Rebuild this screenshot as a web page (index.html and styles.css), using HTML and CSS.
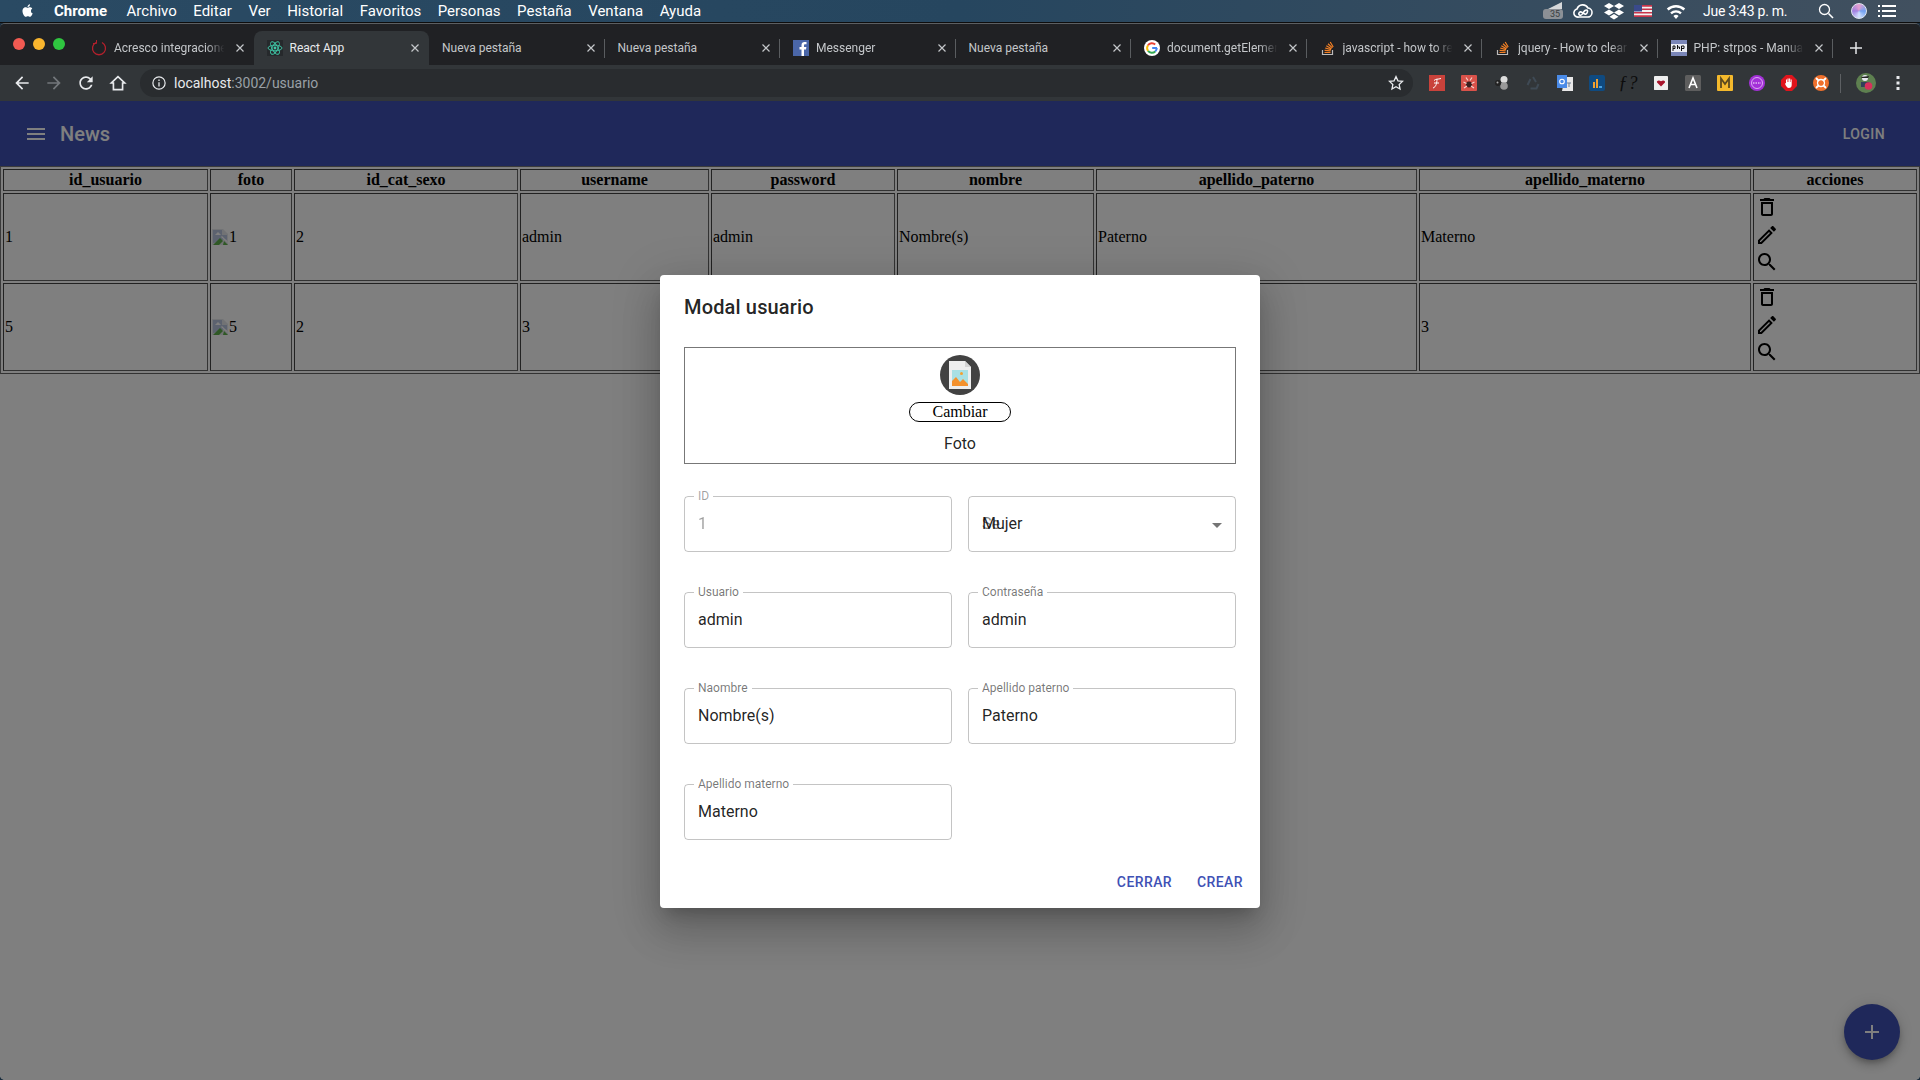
FILE: index.html
```html
<!DOCTYPE html>
<html lang="es">
<head>
<meta charset="utf-8">
<title>React App</title>
<link rel="stylesheet" href="styles.css">
</head>
<body>
<svg class="defs" width="0" height="0">
  <symbol id="i-del" viewBox="0 0 24 24"><path d="M6 19c0 1.1.9 2 2 2h8c1.1 0 2-.9 2-2V7H6v12zM8 9h8v10H8V9zm7.5-5l-1-1h-5l-1 1H5v2h14V4h-3.5z"/></symbol>
  <symbol id="i-edit" viewBox="0 0 24 24"><path d="M14.06 9.02l.92.92L5.92 19H5v-.92l9.06-9.06M17.66 3c-.25 0-.51.1-.7.29l-1.83 1.83 3.75 3.75 1.83-1.83c.39-.39.39-1.02 0-1.41l-2.34-2.34c-.2-.2-.45-.29-.71-.29zm-3.6 3.19L3 17.25V21h3.75L17.81 9.94l-3.75-3.75z"/></symbol>
  <symbol id="i-search" viewBox="0 0 24 24"><path d="M15.5 14h-.79l-.28-.27C15.41 12.59 16 11.11 16 9.5 16 5.91 13.09 3 9.5 3S3 5.91 3 9.5 5.91 16 9.5 16c1.61 0 3.09-.59 4.23-1.57l.27.28v.79l5 4.99L20.49 19l-4.99-5zm-6 0C7.01 14 5 11.99 5 9.5S7.01 5 9.5 5 14 7.01 14 9.5 11.99 14 9.5 14z"/></symbol>
  <symbol id="i-broken" viewBox="0 0 16 16"><path fill="#e4e6ea" d="M0 0h11l5 5v11H0z"/><path fill="#b9c4de" d="M1 1h9v5h5v5l-3-1-4 3-7 1z"/><path fill="#fff" d="M3 6l3-3 3 3z"/><path fill="#5fb04a" d="M1 16l7-7 3 3-4 4z"/><path fill="#5fb04a" d="M12 12l4 4h-5z"/><path fill="#fff" d="M9 8l1-1 6 6v1z"/></symbol>
  <symbol id="i-x" viewBox="0 0 10 10"><path d="M1.5 1.500l7 7M8.5 1.500l-7 7" fill="none" stroke="#c4c7ca" stroke-width="1.2"/></symbol>
  <symbol id="i-so" viewBox="0 0 16 16"><path d="M2.5 10v4.500h10V10" fill="none" stroke="#bcbbbb" stroke-width="1.2"/><path d="M4.5 12.500h6M4.600 10.300l6 .6M5.200 8l5.800 1.700M6.300 5.800l5.200 3M8 3.700l4.400 4.200M10.200 2l3 5" stroke="#f48024" stroke-width="1.2" fill="none"/></symbol>
</svg>

<header class="menubar">
  <svg class="apple" viewBox="0 0 24 24" width="15" height="17"><path fill="#fff" d="M17.5 12.600c0-2.500 2-3.700 2.100-3.800-1.200-1.700-3-1.900-3.600-2-1.500-.2-3 .9-3.800.9s-2-.9-3.300-.9c-1.700 0-3.300 1-4.100 2.500-1.800 3.100-.5 7.600 1.200 10.100.9 1.200 1.900 2.600 3.200 2.500 1.300-.1 1.800-.8 3.300-.8s2 .8 3.300.8c1.400 0 2.300-1.200 3.100-2.500 1-1.400 1.400-2.800 1.400-2.900-.1 0-2.800-1-2.800-3.900zM15 5.100c.7-.9 1.200-2 1-3.200-1 0-2.200.7-2.900 1.500-.6.700-1.200 1.900-1 3 1.100.1 2.200-.5 2.900-1.300z"/></svg>
  <nav class="menu-items">
    <span class="menu-app">Chrome</span><span>Archivo</span><span>Editar</span><span>Ver</span><span>Historial</span><span>Favoritos</span><span>Personas</span><span>Pestaña</span><span>Ventana</span><span>Ayuda</span>
  </nav>
  <div class="status">
    <span class="st-bat">35</span>
    <svg class="st-icon" viewBox="0 0 22 16" width="22" height="16"><g fill="none" stroke="#fff" stroke-width="1.6"><path d="M7 14h8a4.500 4.500 0 0 0 1-9 6 6 0 0 0-11 1 4 4 0 0 0 2 8z"/><path d="M7 10c2-4 6 4 8 0s-2-4-4 0-5 2-4 0"/></g></svg>
    <svg class="st-icon" viewBox="0 0 20 18" width="20" height="18"><path fill="#fff" d="M5 1l5 3-5 3-5-3zM15 1l5 3-5 3-5-3zM5 7.500l5 3-5 3-5-3zM15 7.500l5 3-5 3-5-3zM10 12l4.500 2.700L10 17.500l-4.500-2.800z"/></svg>
    <svg class="st-icon st-flag" viewBox="0 0 18 12" width="18" height="12"><rect width="18" height="12" fill="#f2f2f2"/><path fill="#c8344a" d="M0 0h18v1.700H0zM0 3.400h18v1.700H0zM0 6.900h18v1.700H0zM0 10.300h18V12H0z"/><rect width="8" height="6.500" fill="#3a4a8c"/></svg>
    <svg class="st-icon st-wifi" viewBox="0 0 22 16" width="22" height="16"><path fill="#fff" d="M11 16l-2.600-3a3.800 3.800 0 0 1 5.200 0zM6.800 11.200L5.200 9.400a8.700 8.700 0 0 1 11.600 0l-1.600 1.800a6.200 6.200 0 0 0-8.400 0zM3.500 7.500L1.800 5.600a13.700 13.700 0 0 1 18.400 0l-1.700 1.900a11.200 11.200 0 0 0-15 0z"/></svg>
    <span class="st-time">Jue 3:43 p. m.</span>
    <svg class="st-icon st-search" viewBox="0 0 16 16" width="16" height="16"><circle cx="6.500" cy="6.500" r="5" fill="none" stroke="#fff" stroke-width="1.3"/><path d="M10.500 10.500L15 15" stroke="#fff" stroke-width="1.6"/></svg>
    <span class="st-siri"></span>
    <svg class="st-list" viewBox="0 0 18 12" width="18" height="12"><path fill="#fff" d="M0 0h2v2H0zM4 0h14v2H4zM0 5h2v2H0zM4 5h14v2H4zM0 10h2v2H0zM4 10h14v2H4z"/></svg>
  </div>
</header>

<div class="window">
  <div class="tabstrip">
    <div class="lights"><i class="l-red"></i><i class="l-yellow"></i><i class="l-green"></i></div>
    <div class="tab tab-first">
      <svg class="fav" viewBox="0 0 16 16"><path d="M5 2.500a6.500 6.500 0 1 0 6 0" fill="none" stroke="#b3202c" stroke-width="1.3"/><path d="M5.500 0v3.500H2" fill="none" stroke="#b3202c" stroke-width="1"/></svg>
      <span class="tab-title">Acresco integraciones</span><svg class="tab-x"><use href="#i-x"/></svg>
    </div>
    <div class="tab tab-active">
      <svg class="fav" viewBox="0 0 16 16"><rect width="16" height="16" fill="#26292c"/><g fill="none" stroke="#3fc9a8" stroke-width=".9"><ellipse cx="8" cy="8" rx="7" ry="2.800"/><ellipse cx="8" cy="8" rx="7" ry="2.800" transform="rotate(60 8 8)"/><ellipse cx="8" cy="8" rx="7" ry="2.800" transform="rotate(120 8 8)"/></g><circle cx="8" cy="8" r="1.400" fill="#3fc9a8"/></svg>
      <span class="tab-title tab-title-on">React App</span><svg class="tab-x"><use href="#i-x"/></svg>
    </div>
    <div class="tab tab-plain"><span class="tab-title">Nueva pestaña</span><svg class="tab-x"><use href="#i-x"/></svg></div>
    <div class="tab tab-plain"><span class="tab-title">Nueva pestaña</span><svg class="tab-x"><use href="#i-x"/></svg></div>
    <div class="tab">
      <svg class="fav" viewBox="0 0 16 16"><rect width="16" height="16" fill="#4a66a8"/><path fill="#fff" d="M11 16V9.500h2l.4-2.500H11V5.500c0-.8.3-1.200 1.300-1.200h1.200V2.100C13 2 12.300 2 11.600 2 9.700 2 8.500 3.100 8.500 5.200V7H6.500v2.500h2V16z"/></svg>
      <span class="tab-title">Messenger</span><svg class="tab-x"><use href="#i-x"/></svg>
    </div>
    <div class="tab tab-plain"><span class="tab-title">Nueva pestaña</span><svg class="tab-x"><use href="#i-x"/></svg></div>
    <div class="tab">
      <svg class="fav" viewBox="0 0 16 16"><circle cx="8" cy="8" r="8" fill="#fff"/><path d="M13 8H8.200" stroke="#4285f4" stroke-width="2" fill="none"/><path d="M12.800 8a4.800 4.800 0 0 1-1.600 3.500" stroke="#4285f4" stroke-width="2" fill="none"/><path d="M11.200 11.500A4.800 4.800 0 0 1 4 10.700" stroke="#34a853" stroke-width="2" fill="none"/><path d="M4 10.700a4.800 4.800 0 0 1 0-5.400" stroke="#fbbc05" stroke-width="2" fill="none"/><path d="M4 5.300a4.800 4.800 0 0 1 7.200-.8" stroke="#ea4335" stroke-width="2" fill="none"/></svg>
      <span class="tab-title">document.getElementById</span><svg class="tab-x"><use href="#i-x"/></svg>
    </div>
    <div class="tab"><svg class="fav"><use href="#i-so"/></svg><span class="tab-title">javascript - how to reset</span><svg class="tab-x"><use href="#i-x"/></svg></div>
    <div class="tab"><svg class="fav"><use href="#i-so"/></svg><span class="tab-title">jquery - How to clear</span><svg class="tab-x"><use href="#i-x"/></svg></div>
    <div class="tab">
      <svg class="fav" viewBox="0 0 16 16"><rect width="16" height="16" fill="#7a86b8"/><rect y="4" width="16" height="8" fill="#fff" opacity=".85"/><path d="M2 6v5M2 6h2v2.500H2M6.500 5v4M6.500 7h2v2M10.500 6v5M10.500 6h2.500v2.500h-2.500" fill="none" stroke="#111" stroke-width="1"/></svg>
      <span class="tab-title">PHP: strpos - Manual</span><svg class="tab-x"><use href="#i-x"/></svg>
    </div>
    <svg class="newtab" viewBox="0 0 14 14"><path d="M7 1v12M1 7h12" stroke="#e4e6e8" stroke-width="1.5"/></svg>
  </div>

  <div class="toolbar">
    <span class="tb-btn"><svg viewBox="0 0 24 24" width="20" height="20"><path fill="#e8eaed" d="M20 11H7.830l5.590-5.590L12 4l-8 8 8 8 1.410-1.410L7.830 13H20v-2z"/></svg></span>
    <span class="tb-btn"><svg viewBox="0 0 24 24" width="20" height="20"><path fill="#73777b" d="M4 11h12.170l-5.590-5.590L12 4l8 8-8 8-1.410-1.410L16.170 13H4v-2z"/></svg></span>
    <span class="tb-btn"><svg viewBox="0 0 24 24" width="20" height="20"><path fill="#e8eaed" d="M17.650 6.350C16.200 4.900 14.210 4 12 4c-4.420 0-7.990 3.580-7.990 8s3.570 8 7.990 8c3.730 0 6.840-2.550 7.730-6h-2.080c-.82 2.330-3.040 4-5.650 4-3.310 0-6-2.690-6-6s2.690-6 6-6c1.660 0 3.140.69 4.220 1.780L13 11h7V4l-2.350 2.350z"/></svg></span>
    <span class="tb-btn"><svg viewBox="0 0 24 24" width="20" height="20"><path fill="none" stroke="#e8eaed" stroke-width="2" d="M12 4.300L4 12h2.500v8h11v-8H20z"/></svg></span>
    <div class="omnibox">
      <svg viewBox="0 0 16 16" width="14" height="14"><circle cx="8" cy="8" r="7" fill="none" stroke="#e8eaed" stroke-width="1.4"/><path d="M8 7v5M8 4v1.800" stroke="#e8eaed" stroke-width="1.5"/></svg>
      <span class="url"><b>localhost</b>:3002/usuario</span>
      <svg class="star" viewBox="0 0 24 24" width="18" height="18"><path fill="none" stroke="#e8eaed" stroke-width="1.7" d="M12 3.500l2.600 5.600 6.100.7-4.500 4.200 1.200 6L12 17l-5.400 3 1.200-6-4.500-4.200 6.100-.7z"/></svg>
    </div>
    <div class="exts">
      <span class="ext"><svg viewBox="0 0 16 16" width="16" height="16"><rect width="16" height="16" fill="#c9423b"/><path d="M5 5.500c2-2 4-1 7-2M8 4c0 4-1 8-4 9M5 8h5" stroke="#fff" stroke-width="1" fill="none"/></svg></span>
      <span class="ext"><svg viewBox="0 0 16 16" width="16" height="16"><rect width="16" height="16" rx="1" fill="#d9524a"/><circle cx="8" cy="9.500" r="3" fill="#3a2020"/><path d="M5 2.500l2 3M11 2.500l-2 3M2.500 7l3 1.500M13.500 7l-3 1.500M3 13l3-2M13 13l-3-2" stroke="#f6d0cc" stroke-width="1.2"/></svg></span>
      <span class="ext"><svg viewBox="0 0 16 16" width="16" height="16"><circle cx="11" cy="4.500" r="3.500" fill="#ddd"/><circle cx="11" cy="11" r="3.800" fill="#999"/><circle cx="5" cy="8" r="3" fill="#222"/><circle cx="4.500" cy="7.500" r="1" fill="#aaa"/></svg></span>
      <span class="ext"><svg viewBox="0 0 16 16" width="16" height="16"><path d="M8 2l3 5M13.500 9l-2 4.500h-6M2.500 10l3-6" fill="none" stroke="#3f4a55" stroke-width="2"/></svg></span>
      <span class="ext"><svg viewBox="0 0 16 16" width="16" height="16"><path d="M8 2h8v14H5z" fill="#e8e8e8"/><path d="M0 0h10v13H0z" fill="#4a8be8"/><circle cx="5" cy="6.500" r="2.300" fill="none" stroke="#fff" stroke-width="1.1"/><path d="M10 8h4M12 8v4" stroke="#6a7a90" stroke-width="1"/></svg></span>
      <span class="ext"><svg viewBox="0 0 16 16" width="16" height="16"><rect width="16" height="16" rx="2" fill="#0f4a80"/><path d="M4 7h2v6H4zM7 4h2v9H7z" fill="#f0a030"/><path d="M10 11h3v2h-3z" fill="#48a0e0"/></svg></span>
      <span class="ext ext-f">ƒ?</span>
      <span class="ext"><svg viewBox="0 0 16 16" width="14" height="16"><rect width="16" height="16" rx="1" fill="#eee"/><path d="M8 12L3.500 7.500c-1-2 2-3.500 4.500-1.500 2.500-2 5.500-.5 4.500 1.500z" fill="#a8142c"/></svg></span>
      <span class="ext"><svg viewBox="0 0 16 16" width="16" height="16"><rect width="16" height="16" rx="1.500" fill="#5e5e5e"/><path d="M4 13L8 3l4 10M5.500 9.500h5" stroke="#fff" stroke-width="1.6" fill="none"/></svg></span>
      <span class="ext"><svg viewBox="0 0 16 16" width="16" height="16"><rect width="16" height="16" rx="1" fill="#f4b92c"/><path d="M4 13V3.500L8 9l4-5.500V13" stroke="#5b4a20" stroke-width="1.8" fill="none"/></svg></span>
      <span class="ext"><svg viewBox="0 0 16 16" width="16" height="16"><circle cx="8" cy="8" r="8" fill="#a330d8"/><circle cx="8" cy="8" r="5.500" fill="none" stroke="#e8c8f8" stroke-width=".8"/><path d="M4 8h8" stroke="#fff" stroke-width="1" stroke-dasharray="1.500 1"/></svg></span>
      <span class="ext"><svg viewBox="0 0 16 16" width="16" height="16"><path d="M5 0h6l5 5v6l-5 5H5l-5-5V5z" fill="#e0141c"/><path d="M5 7V4.500h1V7h.5V3.500h1.100V7h.5V3.500h1.100V7h.5V4.500h1V10c0 2-1 3-2.900 3-1.500 0-2-1-3.300-3L4 8.500c.3-.5.700-.4 1-.1z" fill="#fff"/></svg></span>
      <span class="ext"><svg viewBox="0 0 16 16" width="16" height="16"><circle cx="8" cy="8" r="8" fill="#f0702c"/><circle cx="8" cy="8" r="3.500" fill="none" stroke="#fff" stroke-width="1.3"/><path d="M3 3l3 3M13 3l-3 3M3 13l3-3M13 13l-3-3" stroke="#fff" stroke-width="1.8"/></svg></span>
    </div>
    <i class="tb-sep"></i>
    <svg class="me" viewBox="0 0 20 20" width="20" height="20"><circle cx="10" cy="10" r="10" fill="#5e8050"/><circle cx="9" cy="5" r="3" fill="#e8e8f0"/><path d="M5 4l8-1-1 2H6z" fill="#222"/><path d="M5 9h8v5H5z" fill="#33405a"/><circle cx="12.5" cy="13" r="3.800" fill="#d8305c"/></svg>
    <svg class="dots" viewBox="0 0 4 16" width="4" height="16"><path fill="#e8eaed" d="M.5 1h3v3h-3zM.5 6.500h3v3h-3zM.5 12h3v3h-3z"/></svg>
  </div>

  <main class="page">
    <div class="appbar">
      <svg class="hamburger" viewBox="0 0 24 24" width="24" height="24"><path fill="#fff" d="M3 18h18v-2H3v2zm0-5h18v-2H3v2zm0-7v2h18V6H3z"/></svg>
      <span class="appbar-title">News</span>
      <span class="login">LOGIN</span>
    </div>

    <table class="users">
      <colgroup>
        <col class="c1"><col class="c2"><col class="c3"><col class="c4"><col class="c5"><col class="c6"><col class="c7"><col class="c8"><col class="c9">
      </colgroup>
      <thead>
        <tr><th>id_usuario</th><th>foto</th><th>id_cat_sexo</th><th>username</th><th>password</th><th>nombre</th><th>apellido_paterno</th><th>apellido_materno</th><th>acciones</th></tr>
      </thead>
      <tbody>
        <tr>
          <td>1</td>
          <td><svg class="broken"><use href="#i-broken"/></svg>1</td>
          <td>2</td><td>admin</td><td>admin</td><td>Nombre(s)</td><td>Paterno</td><td>Materno</td>
          <td class="actions"><svg class="act"><use href="#i-del"/></svg><svg class="act"><use href="#i-edit"/></svg><svg class="act"><use href="#i-search"/></svg></td>
        </tr>
        <tr>
          <td>5</td>
          <td><svg class="broken"><use href="#i-broken"/></svg>5</td>
          <td>2</td><td>3</td><td>3</td><td>3</td><td>3</td><td>3</td>
          <td class="actions"><svg class="act"><use href="#i-del"/></svg><svg class="act"><use href="#i-edit"/></svg><svg class="act"><use href="#i-search"/></svg></td>
        </tr>
      </tbody>
    </table>

    <span class="fab"><svg viewBox="0 0 24 24" width="24" height="24"><path fill="#fff" d="M19 13h-6v6h-2v-6H5v-2h6V5h2v6h6v2z"/></svg></span>

    <div class="backdrop">
      <section class="modal">
        <h2 class="modal-title">Modal usuario</h2>
        <div class="modal-body">
          <div class="photo-box">
            <span class="avatar">
              <svg viewBox="0 0 24 28" width="24" height="28"><path fill="#eeeeee" d="M1 0h16l6 6v22H1z"/><path fill="#d4d4d4" d="M17 0l6 6h-6z"/><rect x="4" y="9" width="16" height="16" fill="#a8e0e4"/><circle cx="13.5" cy="12.500" r="1.500" fill="#f4a030"/><path fill="#f4912c" d="M4 25v-5l4-4 4 5 3-3 5 5v2z"/></svg>
            </span>
            <button class="change-btn" type="button">Cambiar</button>
            <span class="photo-label">Foto</span>
          </div>
          <div class="form-grid">
            <div class="field field-off"><span class="field-label">ID</span><span class="field-value">1</span></div>
            <div class="field field-select">
              <span class="field-stack"><span class="ghost">Se</span><span class="field-value">Mujer</span></span>
              <svg class="caret" viewBox="0 0 24 24" width="24" height="24"><path fill="rgba(0,0,0,.54)" d="M7 10l5 5 5-5z"/></svg>
            </div>
            <div class="field"><span class="field-label">Usuario</span><span class="field-value">admin</span></div>
            <div class="field"><span class="field-label">Contraseña</span><span class="field-value">admin</span></div>
            <div class="field"><span class="field-label">Naombre</span><span class="field-value">Nombre(s)</span></div>
            <div class="field"><span class="field-label">Apellido paterno</span><span class="field-value">Paterno</span></div>
            <div class="field"><span class="field-label">Apellido materno</span><span class="field-value">Materno</span></div>
          </div>
        </div>
        <div class="modal-actions">
          <button class="text-btn" type="button">CERRAR</button>
          <button class="text-btn" type="button">CREAR</button>
        </div>
      </section>
    </div>
  </main>
</div>
</body>
</html>
```
FILE: styles.css
```css
* { box-sizing: border-box; }
html, body { margin: 0; height: 100%; }
body {
  width: 1920px;
  height: 1080px;
  overflow: hidden;
  display: flex;
  flex-direction: column;
  background: #1b2d3d;
  font-family: "Roboto", "Liberation Sans", sans-serif;
}
.defs { position: absolute; }

/* macOS menu bar */
.menubar {
  flex: 0 0 23px;
  display: flex;
  align-items: center;
  padding: 0 0 1px 20px;
  background: linear-gradient(90deg, #2a4a63, #26465f 50%, #41505f 100%);
  border-bottom: 1px solid #0d0d0d;
  color: #fff;
  font: 15px "Roboto", "Liberation Sans", sans-serif;
}
.apple { margin-right: 19px; }
.menu-items { display: flex; gap: 16.5px; }
.menu-app { font-weight: 700; margin-right: 3px; }
.status { margin-left: auto; display: flex; align-items: center; padding-right: 24px; }
.st-bat {
  position: relative;
  width: 20px; height: 10px; margin: 6px 9px 0 0;
  background: #8c9096; border-radius: 3px;
  color: #3a3d40; font-size: 9px; line-height: 11px; text-align: right; padding-right: 3px;
}
.st-bat::before {
  content: "";
  position: absolute;
  right: 1px; top: -7px;
  border-style: solid;
  border-width: 0 0 7px 14px;
  border-color: transparent transparent #d6d8da transparent;
}
.st-icon { margin-right: 10px; flex: none; }
.st-flag { margin-right: 13px; }
.st-wifi { margin-right: 16px; }
.st-time { margin-right: 22px; font-size: 14px; letter-spacing: -.25px; width: 93px; white-space: nowrap; }
.st-search { margin-right: 17px; }
.st-siri {
  width: 16px; height: 16px; border-radius: 50%; margin-right: 11px;
  background: conic-gradient(#e8a0d0, #70a0f0, #d0e0ff, #a080e0, #e8a0d0);
  border: 1px solid #dfe6f0;
}
.st-list { flex: none; }

/* Browser window */
.window {
  flex: 1;
  min-height: 0;
  display: flex;
  flex-direction: column;
  border-radius: 5px;
  overflow: hidden;
  border-top: 1px solid #5c5f62;
}
.tabstrip {
  flex: 0 0 41px;
  display: flex;
  align-items: flex-end;
  padding-left: 78px;
  background: #202124;
  position: relative;
}
.lights { position: absolute; left: 13px; top: 14px; display: flex; gap: 8px; }
.lights i { width: 12px; height: 12px; border-radius: 50%; }
.l-red { background: #f25a52; }
.l-yellow { background: #f9b52e; }
.l-green { background: #2fc640; }
.tab {
  width: 175.5px;
  height: 34px;
  display: flex;
  align-items: center;
  padding: 0 9px 0 13px;
  font-size: 12px;
  color: #c4c7ca;
  position: relative;
}
.tab::after {
  content: "";
  position: absolute;
  right: 0; top: 8px;
  height: 19px;
  border-right: 1px solid #5a5d60;
}
.tab-active { background: #323639; border-radius: 8px 8px 0 0; color: #e8eaed; }
.tab-active::after, .tab-first::after { display: none; }
.fav { width: 16px; height: 16px; flex: none; margin-right: 7px; }
.tab-title {
  flex: 1;
  min-width: 0;
  white-space: nowrap;
  overflow: hidden;
  -webkit-mask-image: linear-gradient(90deg, #000 80%, transparent 96%);
  mask-image: linear-gradient(90deg, #000 80%, transparent 96%);
}
.tab-title-on { color: #e8eaed; }
.tab-plain .tab-title, .tab-title-on { -webkit-mask-image: none; mask-image: none; }
.tab-x { width: 10px; height: 10px; flex: none; margin-left: 6px; }
.newtab { width: 14px; height: 14px; margin: 0 0 10px 16px; }

.toolbar {
  flex: 0 0 36px;
  display: flex;
  align-items: center;
  padding-left: 6px;
  background: #323639;
}
.tb-btn { width: 32px; display: flex; justify-content: center; }
.omnibox {
  flex: 1;
  height: 28px;
  margin: 0 8px 0 6px;
  padding: 0 8px 0 12px;
  display: flex;
  align-items: center;
  border-radius: 14px;
  background: #292c2f;
}
.url { margin-left: 8px; font-size: 14px; color: #9aa0a6; }
.url b { font-weight: 400; color: #e8eaed; }
.star { margin-left: auto; }
.exts { display: flex; }
.ext { width: 32px; height: 20px; display: flex; align-items: center; justify-content: center; }
.ext-f { font: italic 18px "Liberation Serif", serif; color: #0c0c0c; letter-spacing: 1px; }
.tb-sep { width: 1px; height: 19px; background: #5d6063; margin: 0 15px 0 3.5px; }
.me { flex: none; }
.dots { margin: 0 20px 0 20px; flex: none; }

/* Page */
.page {
  flex: 1;
  min-height: 0;
  position: relative;
  background: #fff;
}
.appbar {
  height: 65px;
  display: flex;
  align-items: center;
  padding: 0 35px 0 24px;
  background: #3f51b5;
  color: #fff;
}
.hamburger { margin-right: 12px; }
.appbar-title { font-size: 20px; font-weight: 500; }
.login { margin-left: auto; font-size: 14px; font-weight: 500; letter-spacing: .4px; }

.users {
  width: 1920px;
  table-layout: fixed;
  border-collapse: separate;
  border-spacing: 2px;
  border: 1px solid;
  border-color: #777 #666 #666 #777;
  font: 16px "Liberation Serif", serif;
  color: #000;
}
.c1 { width: 205px; } .c2 { width: 82px; } .c3 { width: 224px; }
.c4 { width: 189px; } .c5 { width: 184px; } .c6 { width: 197px; }
.c7 { width: 321px; } .c8 { width: 332px; } .c9 { width: 164px; }
.users th, .users td {
  padding: 1px;
  border: 1px solid;
  border-color: #444 #666 #666 #444;
}
.users td { height: 88px; }
.users td.actions { padding-bottom: 6px; }
.broken { width: 16px; height: 16px; margin-right: 1px; vertical-align: -3px; }
.act { display: block; width: 24px; height: 24px; }
.act + .act { margin-top: 3.5px; }

.fab {
  position: absolute;
  right: 20px;
  bottom: 20px;
  width: 56px;
  height: 56px;
  border-radius: 50%;
  display: flex;
  align-items: center;
  justify-content: center;
  background: #3f51b5;
  box-shadow: 0 3px 5px -1px rgba(0,0,0,.2), 0 6px 10px rgba(0,0,0,.14), 0 1px 18px rgba(0,0,0,.12);
}

.backdrop {
  position: absolute;
  inset: 0;
  padding-top: 1px;
  display: flex;
  align-items: center;
  justify-content: center;
  background: rgba(0,0,0,.5);
}
.modal {
  width: 600px;
  background: #fff;
  border-radius: 4px;
  box-shadow: 0 11px 15px -7px rgba(0,0,0,.2), 0 24px 38px 3px rgba(0,0,0,.14), 0 9px 46px 8px rgba(0,0,0,.12);
  color: rgba(0,0,0,.87);
}
.modal-title { margin: 0; padding: 16px 24px; font-size: 20px; font-weight: 500; line-height: 32px; letter-spacing: .15px; }
.modal-body { padding: 8px 24px; }
.photo-box {
  height: 117px;
  padding-top: 7px;
  display: flex;
  flex-direction: column;
  align-items: center;
  border: 1px solid #777;
  color: #000;
}
.avatar {
  width: 40px; height: 40px; border-radius: 50%;
  display: flex; align-items: center; justify-content: center;
  background: #424242;
}
.change-btn {
  width: 102px; height: 20px; margin-top: 7px; padding: 0;
  border: 1px solid #000; border-radius: 10px; background: #fff; color: #000;
  font: 16px/18px "Liberation Serif", serif;
}
.photo-label { margin-top: 10px; font-size: 16px; line-height: 24px; color: rgba(0,0,0,.87); }
.form-grid {
  margin-top: 32px;
  display: grid;
  grid-template-columns: 268px 268px;
  column-gap: 16px;
  row-gap: 40px;
}
.field {
  position: relative;
  height: 56px;
  padding: 0 13px;
  display: flex;
  align-items: center;
  border: 1px solid rgba(0,0,0,.23);
  border-radius: 4px;
  font-size: 16px;
}
.field-label {
  position: absolute;
  left: 9px;
  top: -8px;
  padding: 0 4px;
  background: #fff;
  font-size: 12px;
  line-height: 14px;
  color: rgba(0,0,0,.54);
}
.field-off .field-label { color: rgba(0,0,0,.38); }
.field-off .field-value { color: #000; opacity: .38; will-change: opacity; }
.field-stack { display: grid; }
.field-stack > span { grid-area: 1 / 1; }
.ghost { color: rgba(0,0,0,.5); }
.caret { position: absolute; right: 6px; top: 16px; }
.modal-actions { margin-top: 8px; padding: 8px 9px; display: flex; justify-content: flex-end; gap: 9px; }
.text-btn {
  height: 36px;
  padding: 6px 8px;
  border: 0;
  background: none;
  color: #3f51b5;
  font: 500 14px/24px "Roboto", sans-serif;
  letter-spacing: .4px;
}
```
